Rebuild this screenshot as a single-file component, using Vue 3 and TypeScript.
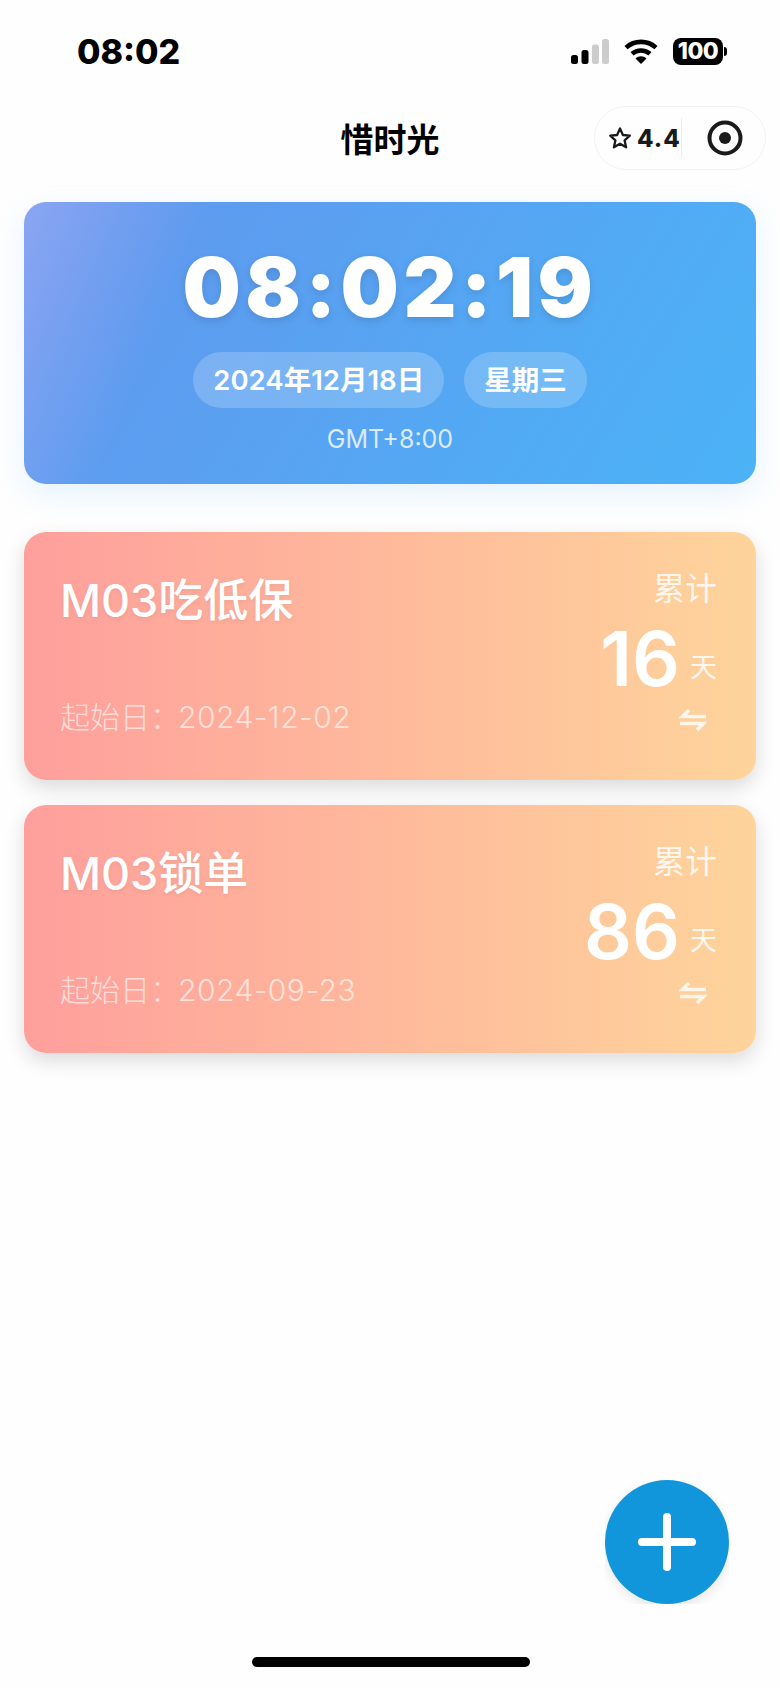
<script setup lang="ts">
interface Item { name: string; start: string; days: number }
const items: Item[] = [
  { name: 'M03吃低保', start: '2024-12-02', days: 16 },
  { name: 'M03锁单', start: '2024-09-23', days: 86 },
]
</script>

<template>
  <div class="page">
    <header class="status">
      <span class="status-time">08:02</span>
      <div class="status-icons">
        <svg class="signal" width="38" height="25" viewBox="0 0 38 25">
          <rect x="0" y="16" width="7" height="9" rx="2.5" fill="#000" />
          <rect x="10.5" y="11" width="7" height="14" rx="2.5" fill="#000" />
          <rect x="21" y="5.5" width="7" height="19.5" rx="2.5" fill="#ccc" />
          <rect x="31" y="0" width="7" height="25" rx="2.5" fill="#ccc" />
        </svg>
        <svg class="wifi" width="34" height="25" viewBox="0 0 34 25">
          <path d="M2 8.6C10.5 1 23.500 1 32 8.600" fill="none" stroke="#000" stroke-width="4.600" stroke-linecap="butt" />
          <path d="M8 14.800C13.200 10.400 20.800 10.400 26 14.800" fill="none" stroke="#000" stroke-width="4.600" />
          <path d="M11.500 19.500C14.800 16.600 19.200 16.600 22.500 19.500L17 25Z" fill="#000" />
        </svg>
        <div class="battery">
          <span class="battery-body">100</span>
          <span class="battery-nub"></span>
        </div>
      </div>
    </header>

    <nav class="nav">
      <h1 class="nav-title">惜时光</h1>
      <div class="capsule">
        <svg class="star" width="24" height="24" viewBox="0 0 24 24">
          <path d="M12 2.500L14.900 9 21.800 9.700 16.600 14.400 18.100 21.300 12 17.700 5.900 21.300 7.400 14.400 2.200 9.700 9.100 9Z" fill="none" stroke="#1a1a1a" stroke-width="2.300" stroke-linejoin="round" />
        </svg>
        <span class="score">4.4</span>
        <span class="capsule-line"></span>
        <svg class="target" width="36" height="36" viewBox="0 0 36 36">
          <circle cx="18" cy="18" r="15.500" fill="none" stroke="#1a1a1a" stroke-width="4" />
          <circle cx="18" cy="18" r="6" fill="#1a1a1a" />
        </svg>
      </div>
    </nav>

    <main class="content">
      <section class="clock">
        <div class="clock-time">08:02:19</div>
        <div class="pills">
          <span class="pill">2024年12月18日</span>
          <span class="pill">星期三</span>
        </div>
        <div class="zone">GMT+8:00</div>
      </section>

      <section class="list">
        <article v-for="item in items" :key="item.name" class="card">
          <div class="card-left">
            <div class="card-name">{{ item.name }}</div>
            <div class="card-start"><span class="start-label">起始日：</span><span class="start-date">{{ item.start }}</span></div>
          </div>
          <div class="card-right">
            <div class="card-label">累计</div>
            <div class="card-count"><span class="days">{{ item.days }}</span><span class="unit">天</span></div>
            <svg class="swap" width="28" height="24" viewBox="0 0 28 24">
              <path d="M10 2L3.500 8.500H27" fill="none" stroke="currentColor" stroke-width="3.600" />
              <path d="M1 15.500H24.500L18 22" fill="none" stroke="currentColor" stroke-width="3.600" />
            </svg>
          </div>
        </article>
      </section>
    </main>

    <button class="fab" type="button" aria-label="添加">
      <span class="plus-h"></span>
      <span class="plus-v"></span>
    </button>
    <div class="home"></div>
  </div>
</template>

<style>
html, body { margin: 0; background: #fff; }
</style>

<style scoped>
.page {
  position: relative;
  width: 780px;
  height: 1688px;
  overflow: hidden;
  background: #fefefe;
  font-family: Inter, "Noto Sans CJK SC", sans-serif;
  color: #000;
}
.status {
  height: 104px;
  box-sizing: border-box;
  padding: 33px 53px 0 77px;
  display: flex;
  justify-content: space-between;
  align-items: flex-start;
}
.status-time {
  font-size: 34px;
  font-weight: 800;
  line-height: 38px;
}
.status-icons {
  display: flex;
  align-items: center;
  gap: 15px;
  padding-top: 5px;
}
.battery { display: flex; align-items: center; gap: 1px; }
.battery-body {
  width: 50px;
  height: 27px;
  border-radius: 8px;
  background: #000;
  color: #fff;
  font-size: 23px;
  font-weight: 800;
  line-height: 27px;
  letter-spacing: -0.5px;
  text-align: center;
}
.battery-nub {
  width: 3px;
  height: 9px;
  background: #000;
  border-radius: 0 3px 3px 0;
}
.nav {
  height: 64px;
  margin-top: 2px;
  position: relative;
  display: flex;
  align-items: center;
  justify-content: center;
}
.nav-title {
  margin: 0;
  padding-top: 4px;
  font-size: 33px;
  font-weight: 700;
  line-height: 60px;
}
.capsule {
  position: absolute;
  left: 594px;
  top: 0;
  width: 172px;
  height: 64px;
  box-sizing: border-box;
  border: 1px solid #f2f2f2;
  border-radius: 32px;
  display: flex;
  align-items: center;
  padding-left: 13px;
}
.score {
  margin-left: 5px;
  font-size: 24px;
  font-weight: 800;
  color: #1a1a1a;
  letter-spacing: 1px;
}
.capsule-line {
  width: 1px;
  height: 40px;
  background: #ececec;
}
.target { margin-left: 25px; }
.content {
  padding: 32px 24px 0;
}
.clock {
  height: 282px;
  box-sizing: border-box;
  padding-top: 39px;
  border-radius: 22px;
  background:
    linear-gradient(112deg, rgba(146, 168, 243, 0.85) 0%, rgba(98, 152, 238, 0) 22%),
    linear-gradient(122deg, #6098ee 10%, #4bb3f7 100%);
  box-shadow: 0 10px 30px rgba(79, 172, 254, 0.14);
  color: #fff;
  text-align: center;
}
.clock-time {
  font-size: 82px;
  font-weight: 900;
  line-height: 93px;
  letter-spacing: 4.500px;
  text-shadow: 0 3px 8px rgba(0, 0, 0, 0.12);
}
.pills {
  margin-top: 18px;
  display: flex;
  justify-content: center;
  gap: 20px;
}
.pill {
  height: 56px;
  padding: 0 20px;
  border-radius: 28px;
  background: rgba(255, 255, 255, 0.2);
  font-size: 27.500px;
  font-weight: 600;
  line-height: 56px;
}
.zone {
  margin-top: 15px;
  font-size: 25px;
  line-height: 32px;
  color: rgba(255, 255, 255, 0.8);
}
.list {
  margin-top: 48px;
  display: flex;
  flex-direction: column;
  gap: 25px;
}
.card {
  height: 248px;
  box-sizing: border-box;
  padding: 0 39px 0 36px;
  border-radius: 22px;
  background: linear-gradient(90deg, #fe9f9c 0%, #fed49b 100%);
  box-shadow: 0 8px 20px rgba(0, 0, 0, 0.14);
  color: #fff;
  display: flex;
  justify-content: space-between;
}
.card-left {
  display: flex;
  flex-direction: column;
  padding-top: 41px;
}
.card-name {
  font-size: 45px;
  font-weight: 500;
  line-height: 56px;
  text-shadow: 0 2px 4px rgba(0, 0, 0, 0.06);
}
.card-start {
  margin-top: 68px;
  font-size: 30px;
  font-weight: 300;
  line-height: 40px;
  color: rgba(255, 255, 255, 0.65);
}
.start-label { margin-right: -2px; }
.start-date { letter-spacing: 0.500px; }
.card-right {
  display: flex;
  flex-direction: column;
  align-items: flex-end;
  padding-top: 36px;
}
.card-label {
  font-size: 32px;
  line-height: 42px;
  color: rgba(255, 255, 255, 0.85);
}
.card-count {
  margin-top: 4px;
  display: flex;
  align-items: baseline;
  gap: 10px;
  height: 90px;
}
.days {
  font-size: 75px;
  font-weight: 600;
  line-height: 90px;
}
.unit {
  font-size: 27px;
  color: rgba(255, 255, 255, 0.85);
  position: relative;
  top: -9px;
}
.swap {
  margin-top: 4px;
  margin-right: 10px;
  color: rgba(255, 255, 255, 0.8);
}
.fab {
  position: absolute;
  left: 605px;
  top: 1480px;
  width: 124px;
  height: 124px;
  padding: 0;
  border: 0;
  border-radius: 50%;
  background: #1296db;
  box-shadow: 0 4px 12px rgba(0, 0, 0, 0.1);
  clip-path: inset(0);
}
.plus-h, .plus-v {
  position: absolute;
  background: #fff;
  border-radius: 4px;
}
.plus-h { left: 33px; top: 58px; width: 58px; height: 8px; }
.plus-v { left: 58px; top: 33px; width: 8px; height: 58px; }
.home {
  position: absolute;
  left: 252px;
  top: 1657px;
  width: 278px;
  height: 10px;
  border-radius: 5px;
  background: #000;
}
</style>
